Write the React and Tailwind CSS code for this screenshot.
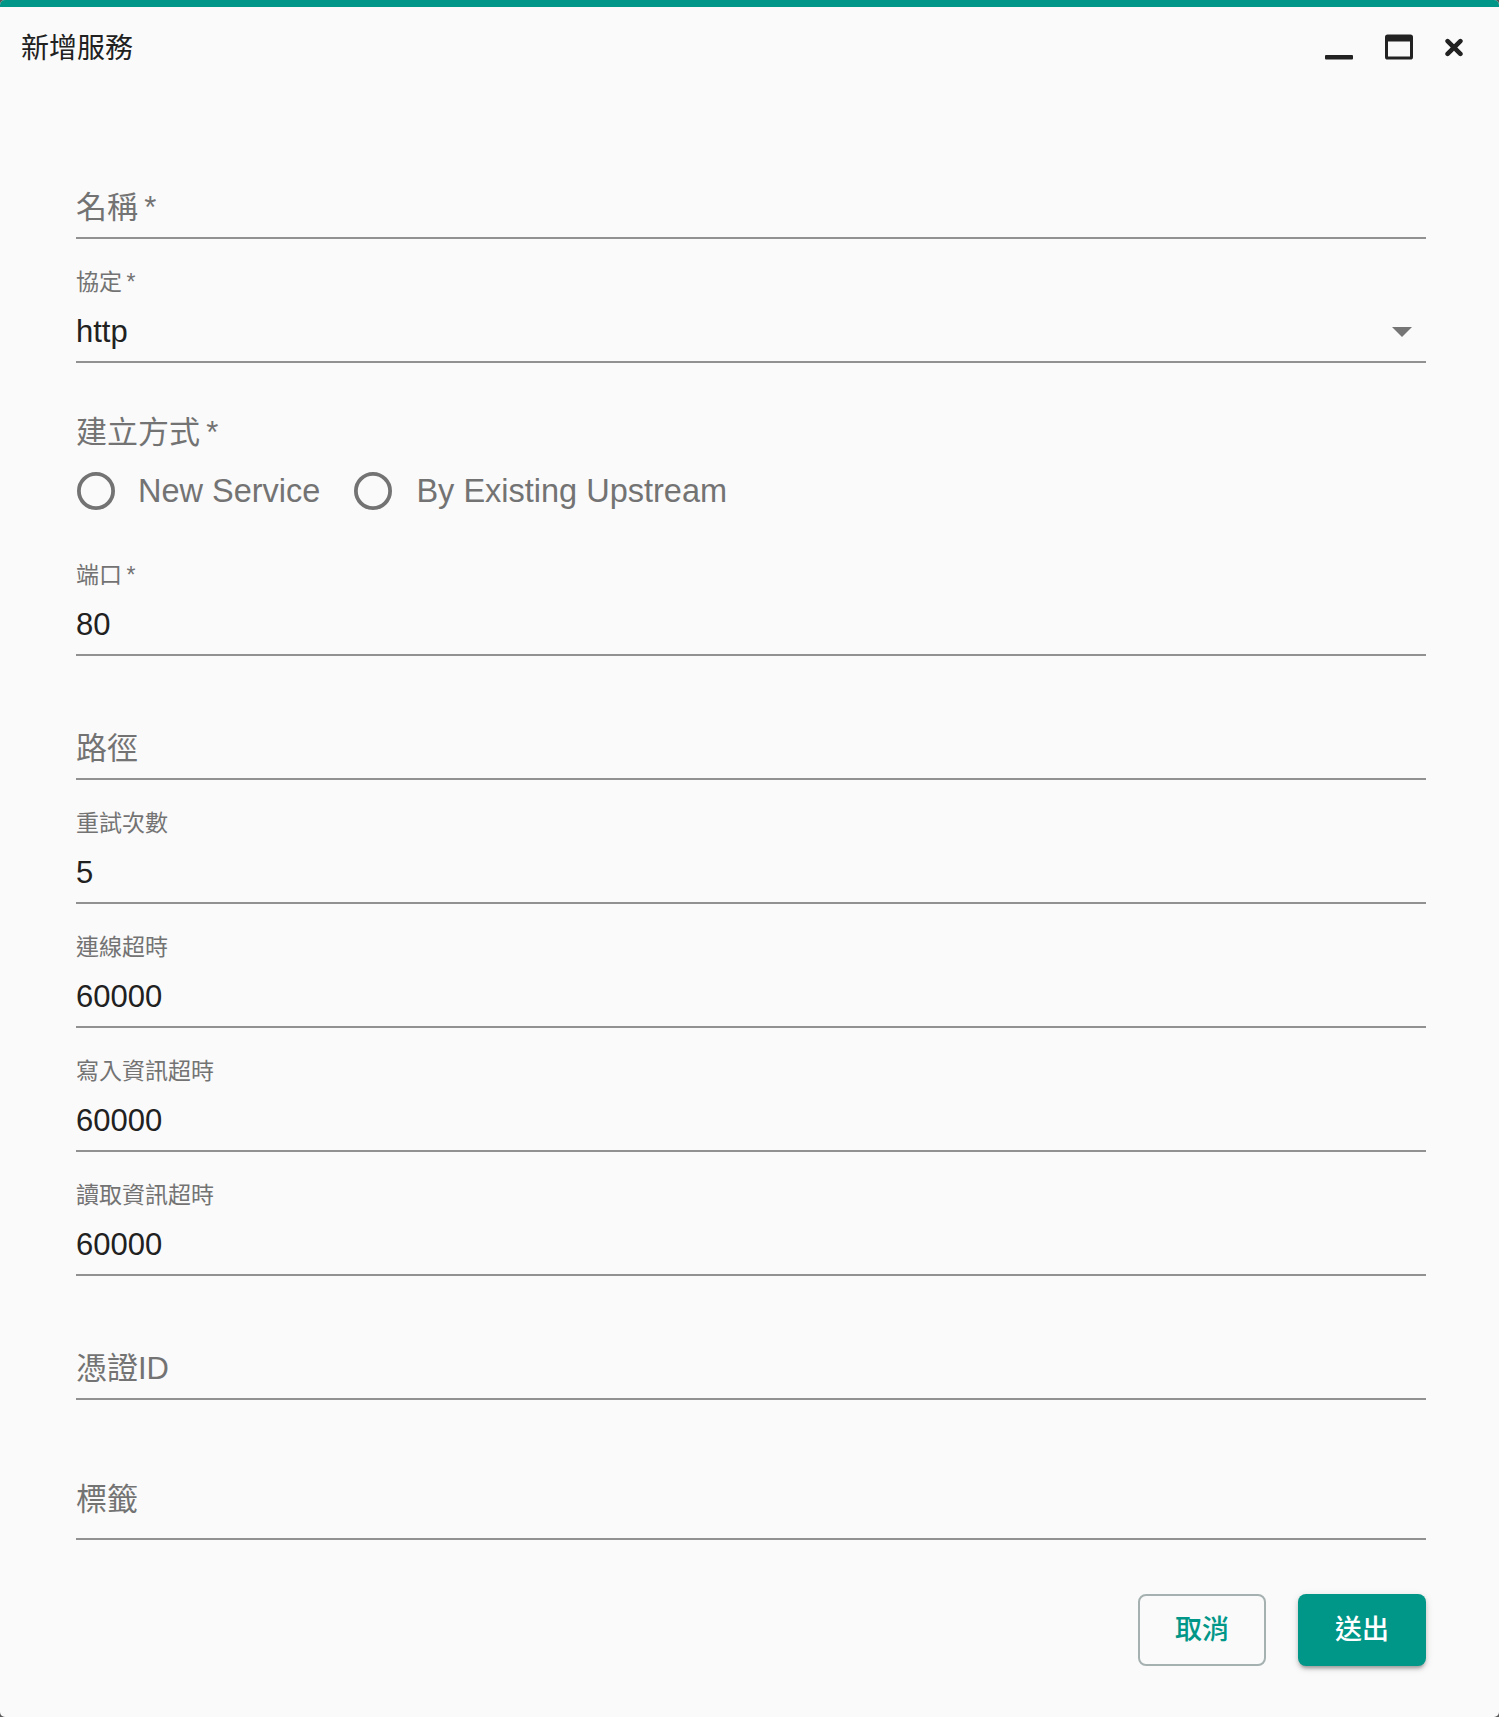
import React from 'react';

const fieldList = [
  { label: '名稱\u2009*', empty: true },
  { label: '協定\u2009*', value: 'http', select: true },
  { radio: true },
  { label: '端口\u2009*', value: '80', gap: 'mt-[44px]' },
  { label: '路徑', empty: true },
  { label: '重試次數', value: '5' },
  { label: '連線超時', value: '60000' },
  { label: '寫入資訊超時', value: '60000' },
  { label: '讀取資訊超時', value: '60000' },
  { label: '憑證ID', empty: true },
  { label: '標籤', empty: true, tall: true },
];

function TextField({ label, value, empty, select, tall, gap }) {
  return (
    <div className={gap || 'mt-[31px] first:mt-0'}>
      <div className="h-[24px] text-[23px] leading-[24px] text-[#737373] whitespace-nowrap">
        {!empty && label}
      </div>
      <div
        className={
          tall
            ? 'mt-[8px] h-[75px] pb-[1px] flex items-center'
            : 'mt-[8px] h-[59px] flex items-center'
        }
      >
        {empty ? (
          <span className="text-[31px] leading-[36px] text-[#737373]">{label}</span>
        ) : (
          <span className="text-[31px] leading-[36px] text-[#212121]">{value}</span>
        )}
        {select && (
          <svg className="ml-auto mr-[14px]" width="20" height="10" viewBox="0 0 20 10">
            <polygon points="0,0 20,0 10,10" fill="#757575" />
          </svg>
        )}
      </div>
      <div className="h-[2px] bg-[#919191]" />
    </div>
  );
}

function RadioCircle() {
  return (
    <svg width="38" height="38" viewBox="0 0 38 38" className="shrink-0">
      <circle cx="19" cy="19" r="17.1" fill="none" stroke="#737373" strokeWidth="3.8" />
    </svg>
  );
}

function RadioGroup() {
  return (
    <div className="pt-[52px]">
      <div className="h-[36px] text-[31px] leading-[36px] text-[#737373]">
        建立方式{'\u2009'}*
      </div>
      <div className="mt-[12px] h-[56px] flex items-center text-[32.5px] text-[#737373]">
        <label className="flex items-center ml-[1px]">
          <RadioCircle />
          <span className="ml-[23px]">New Service</span>
        </label>
        <label className="flex items-center ml-[34px]">
          <RadioCircle />
          <span className="ml-[24px]">By Existing Upstream</span>
        </label>
      </div>
    </div>
  );
}

export default function App() {
  return (
    <div className="min-h-screen bg-[#5a5a5a]">
      <div className="w-[1499px] h-[1717px] bg-[#fafafa] rounded-[5px] overflow-hidden font-['Liberation_Sans','Noto_Sans_CJK_TC',sans-serif]">
        <div className="h-[7px] bg-[#009688]" />

        <div className="h-[83px] flex items-center pl-[21px] pr-[36px]">
          <h2 className="text-[28px] leading-[32px] text-[#212121]">新增服務</h2>
          <div className="ml-auto mb-[4px] flex items-center gap-[32px] text-[#222222]">
            <svg width="28" height="28" viewBox="0 0 28 28">
              <rect x="0" y="22" width="28" height="4.5" rx="1" fill="currentColor" />
            </svg>
            <svg width="28" height="28" viewBox="0 0 28 28">
              <path
                fillRule="evenodd"
                fill="currentColor"
                d="M2.6 1.5h22.8a2.6 2.6 0 0 1 2.6 2.6v19.8a2.6 2.6 0 0 1-2.6 2.6H2.6A2.6 2.6 0 0 1 0 23.9V4.1a2.6 2.6 0 0 1 2.6-2.6zM3 8.6v14.9h22V8.6z"
              />
            </svg>
            <svg width="18" height="28" viewBox="0 0 18 28">
              <path
                d="M2.6 8.1 15.4 20.9M15.4 8.1 2.6 20.9"
                stroke="currentColor"
                strokeWidth="4.6"
                strokeLinecap="round"
                fill="none"
              />
            </svg>
          </div>
        </div>

        <form className="pt-[56px] pl-[76px] pr-[73px]">
          {fieldList.map((f, i) =>
            f.radio ? <RadioGroup key={i} /> : <TextField key={i} {...f} />
          )}

          <div className="mt-[54px] flex justify-end items-center gap-[32px]">
            <button
              type="button"
              className="w-[128px] h-[72px] rounded-[8px] border-2 border-[#a5b1b0] text-[27px] font-medium text-[#009688]"
            >
              取消
            </button>
            <button
              type="submit"
              className="w-[128px] h-[72px] rounded-[8px] bg-[#009688] text-[27px] font-medium text-white shadow-[0_4px_3px_-2px_rgba(0,0,0,0.2),0_3px_4px_0_rgba(0,0,0,0.14),0_2px_9px_0_rgba(0,0,0,0.12)]"
            >
              送出
            </button>
          </div>
        </form>
      </div>
    </div>
  );
}
